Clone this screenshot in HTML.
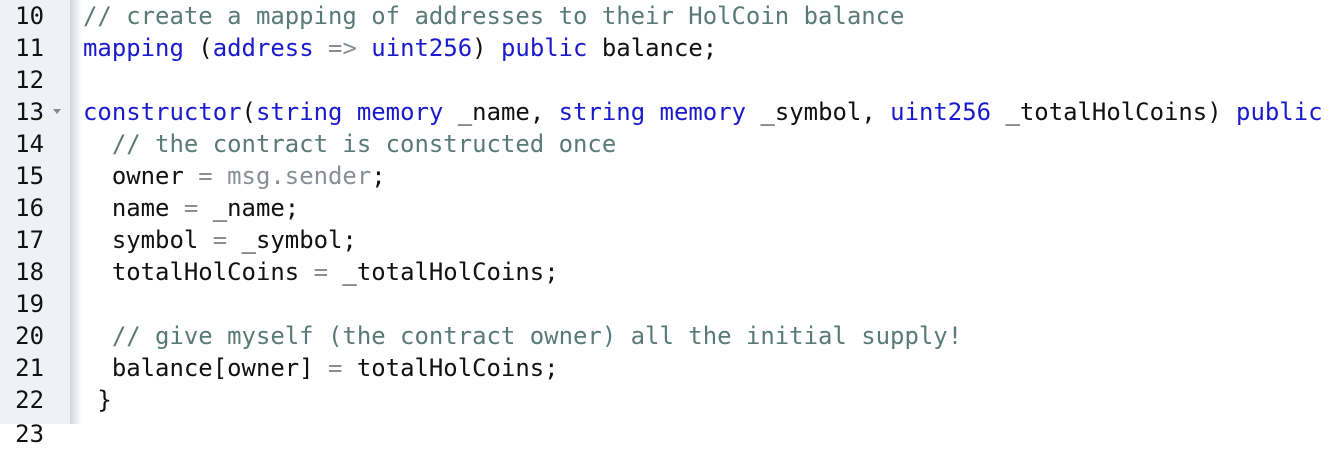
<!DOCTYPE html>
<html><head><style>
html,body{margin:0;padding:0;width:1336px;height:424px;overflow:hidden;background:#fff;}
.g{position:absolute;left:0;top:0;width:70px;height:424px;background:#eef1f6;}
.s{position:absolute;left:70px;top:0;width:12px;height:424px;background:linear-gradient(to right,#d4d6da,#eceef0 60%,#fff);}
.l{position:absolute;left:0;height:32px;line-height:32px;font-family:"DejaVu Sans Mono","Liberation Mono",monospace;font-size:23.95px;white-space:pre;color:#111;}
.n{width:44px;text-align:right;}
.c{left:83px;}
.cm{color:#5a7a76;}
.k{color:#1a1acc;}
.o{color:#8a8f96;}
.a{position:absolute;left:53px;top:109px;width:0;height:0;border-left:4px solid transparent;border-right:4px solid transparent;border-top:5px solid #888;}
</style></head><body>
<div class="g"></div><div class="s"></div>
<div class="l n" style="top:0">10</div>
<div class="l n" style="top:32px">11</div>
<div class="l n" style="top:64px">12</div>
<div class="l n" style="top:96px">13</div>
<div class="l n" style="top:128px">14</div>
<div class="l n" style="top:160px">15</div>
<div class="l n" style="top:192px">16</div>
<div class="l n" style="top:224px">17</div>
<div class="l n" style="top:256px">18</div>
<div class="l n" style="top:288px">19</div>
<div class="l n" style="top:320px">20</div>
<div class="l n" style="top:352px">21</div>
<div class="l n" style="top:384px">22</div>
<div class="l n" style="top:418px">23</div>
<div class="a"></div>
<div class="l c cm" style="top:0">// create a mapping of addresses to their HolCoin balance</div>
<div class="l c" style="top:32px"><span class="k">mapping</span> (<span class="k">address</span> <span class="o">=&gt;</span> <span class="k">uint256</span>) <span class="k">public</span> balance;</div>
<div class="l c" style="top:96px"><span class="k">constructor</span>(<span class="k">string</span> <span class="k">memory</span> _name, <span class="k">string</span> <span class="k">memory</span> _symbol, <span class="k">uint256</span> _totalHolCoins) <span class="k">public</span></div>
<div class="l c cm" style="top:128px">  // the contract is constructed once</div>
<div class="l c" style="top:160px">  owner <span class="o">=</span> <span class="o">msg.sender</span>;</div>
<div class="l c" style="top:192px">  name <span class="o">=</span> _name;</div>
<div class="l c" style="top:224px">  symbol <span class="o">=</span> _symbol;</div>
<div class="l c" style="top:256px">  totalHolCoins <span class="o">=</span> _totalHolCoins;</div>
<div class="l c cm" style="top:320px">  // give myself (the contract owner) all the initial supply!</div>
<div class="l c" style="top:352px">  balance[owner] <span class="o">=</span> totalHolCoins;</div>
<div class="l c" style="top:384px"> }</div>
</body></html>
